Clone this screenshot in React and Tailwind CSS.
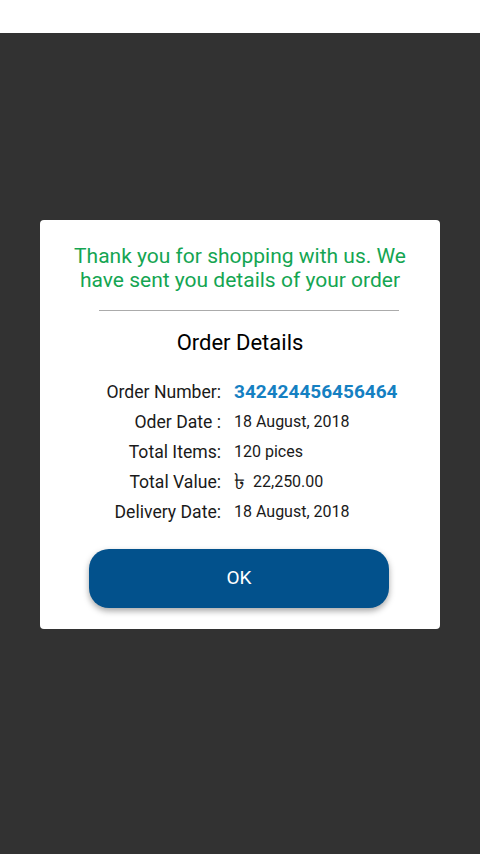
export default function App() {
  const rows = [
    ['Order Number:', '342424456456464', 'number'],
    ['Oder Date :', '18 August, 2018'],
    ['Total Items:', '120 pices'],
    ['Total Value:', '22,250.00', 'money'],
    ['Delivery Date:', '18 August, 2018'],
  ]

  return (
    <div className="w-[480px] h-[854px] flex flex-col bg-white font-['Roboto',sans-serif]">
      <div className="h-[33px] bg-white" />
      <div className="flex-1 bg-[#323232] flex flex-col items-center pt-[187px]">
        <div className="w-[400px] bg-white rounded-[4px] pt-6 pb-[21px] flex flex-col items-center">
          <p className="text-[21px] leading-[24px] text-[#14a552] text-center px-4">
            Thank you for shopping with us. We have sent you details of your order
          </p>
          <div className="w-[300px] h-px bg-[#ababab] mt-[18px] ml-[18px]" />
          <h2 className="mt-5 text-[22px] leading-[24px] text-black">Order Details</h2>
          <div className="mt-[22px] w-full flex flex-col">
            {rows.map(([label, value, kind]) => (
              <div key={label} className="flex items-center h-[30px]">
                <span className="w-[181px] text-right text-[17.6px] text-[#1a1a1a]">{label}</span>
                {kind === 'number' ? (
                  <span className="pl-[13px] text-[19px] font-bold text-[#1580c2]">{value}</span>
                ) : kind === 'money' ? (
                  <span className="pl-[13px] text-[16px] text-[#1a1a1a] flex items-center">
                    <span className="text-[22px] leading-none mr-[8px]">৳</span>
                    {value}
                  </span>
                ) : (
                  <span className="pl-[13px] text-[16px] text-[#1a1a1a]">{value}</span>
                )}
              </div>
            ))}
          </div>
          <button className="mt-[22px] mr-[2px] w-[300px] h-[59px] rounded-[20px] bg-[#02518c] text-white text-[19px] shadow-[0_3px_6px_rgba(0,0,0,0.35)]">
            OK
          </button>
        </div>
      </div>
    </div>
  )
}
